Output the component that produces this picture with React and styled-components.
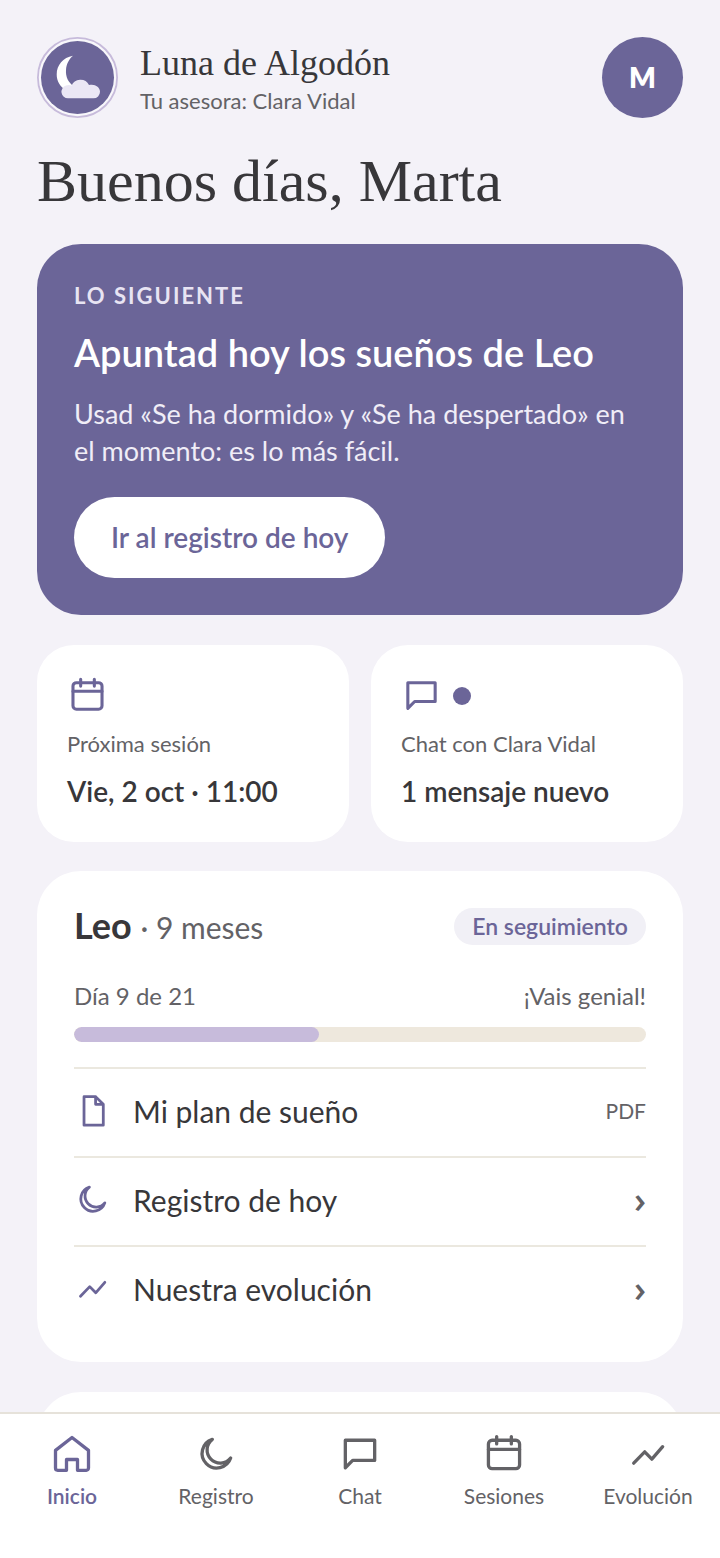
import React from 'react';
import styled, { createGlobalStyle } from 'styled-components';

const GlobalStyle = createGlobalStyle`
  * {
    box-sizing: border-box;
    margin: 0;
    padding: 0;
  }

  body {
    background: #f4f2f8;
    color: #38373a;
    font-family: Lato, 'Open Sans', sans-serif;
  }

  a {
    color: inherit;
    text-decoration: none;
  }
`;

const Screen = styled.div`
  display: flex;
  flex-direction: column;
  height: 100vh;
`;

const Content = styled.main`
  flex: 1;
  min-height: 0;
  overflow-y: auto;
  scrollbar-width: none;
  padding: 37px 37px 0;
`;

const Header = styled.header`
  display: flex;
  align-items: center;
  gap: 22px;
`;

const Logo = styled.svg`
  flex: none;
  width: 81px;
  height: 81px;
`;

const Brand = styled.div`
  flex: 1;
  min-width: 0;
  padding-top: 4px;
`;

const BrandName = styled.p`
  font-family: 'Liberation Serif', serif;
  font-size: 36px;
  line-height: 42px;
`;

const Advisor = styled.p`
  color: #636266;
  font-size: 22px;
  line-height: 34px;
`;

const Avatar = styled.button`
  flex: none;
  width: 81px;
  height: 81px;
  padding-bottom: 2px;
  border: 0;
  border-radius: 50%;
  background: #6b6598;
  color: #fff;
  font: 800 28px Lato, sans-serif;
`;

const Greeting = styled.h1`
  margin: 30px 0;
  font-family: 'Liberation Serif', serif;
  font-size: 60px;
  font-weight: 400;
  line-height: 66px;
`;

const Hero = styled.section`
  padding: 37px;
  border-radius: 44px;
  background: #6b6598;
  color: #fff;
`;

const HeroLabel = styled.p`
  color: #e8e4f3;
  font-size: 22px;
  font-weight: 700;
  letter-spacing: 2px;
  line-height: 29px;
  text-transform: uppercase;
`;

const HeroTitle = styled.h2`
  margin: 22px 0 23px;
  font-size: 38px;
  font-weight: 600;
  line-height: 40px;
`;

const HeroText = styled.p`
  color: #f0edf7;
  font-size: 27px;
  line-height: 37px;
`;

const HeroButton = styled.button`
  height: 81px;
  margin-top: 28px;
  padding: 0 37px 2px;
  border: 0;
  border-radius: 41px;
  background: #fff;
  color: #6b6598;
  font: 600 28px Lato, sans-serif;
`;

const Tiles = styled.div`
  display: grid;
  grid-template-columns: 1fr 1fr;
  gap: 22px;
  margin: 30px 0 29px;
`;

const Tile = styled.a`
  display: flex;
  flex-direction: column;
  gap: 15px;
  padding: 30px 30px 32px;
  border-radius: 37px;
  background: #fff;
`;

const TileIcons = styled.span`
  display: flex;
  align-items: center;
  gap: 11px;
  color: #6b6598;
`;

const UnreadDot = styled.span`
  width: 18px;
  height: 18px;
  border-radius: 50%;
  background: #6b6598;
`;

const TileLabel = styled.span`
  color: #636266;
  font-size: 22px;
  line-height: 26px;
`;

const TileValue = styled.strong`
  font-size: 28px;
  font-weight: 600;
  line-height: 38px;
`;

const Card = styled.section`
  min-height: 120px;
  margin-bottom: 30px;
  padding: 37px 37px 28px;
  border-radius: 44px;
  background: #fff;
`;

const CardHead = styled.div`
  display: flex;
  align-items: center;
  justify-content: space-between;
  height: 37px;
`;

const BabyName = styled.h2`
  font-size: 36px;
  font-weight: 700;
  line-height: 37px;
`;

const Age = styled.span`
  color: #636266;
  font-size: 30px;
  font-weight: 400;
`;

const Badge = styled.span`
  padding: 0 18px;
  border-radius: 19px;
  background: #f1f0f6;
  color: #6b6598;
  font-size: 23px;
  font-weight: 600;
  line-height: 37px;
`;

const ProgressLabels = styled.div`
  display: flex;
  justify-content: space-between;
  margin: 35px 0 15px;
  color: #636266;
  font-size: 24px;
  line-height: 32px;
`;

const Track = styled.div`
  height: 15px;
  margin-bottom: 25px;
  overflow: hidden;
  border-radius: 8px;
  background: #eee8dd;
`;

const Fill = styled.div`
  height: 100%;
  border-radius: 8px;
  background: #c7bbdb;
`;

const Row = styled.a`
  display: flex;
  align-items: center;
  gap: 22px;
  height: 89px;
  padding-bottom: 4px;
  border-top: 2px solid #ebe8df;
  font-size: 30px;
`;

const RowIcon = styled.span`
  display: flex;
  color: #6b6598;
`;

const RowText = styled.span`
  flex: 1;
`;

const RowHint = styled.span`
  color: #636266;
  font-size: 21px;
`;

const RowArrow = styled.span`
  color: #636266;
  font-family: 'Open Sans', sans-serif;
  font-size: 36px;
  font-weight: 600;
  line-height: 36px;
`;

const TabBar = styled.nav`
  display: grid;
  grid-template-columns: repeat(5, 1fr);
  flex: none;
  padding: 18px 0 49px;
  border-top: 2px solid #e6e2da;
  background: #fff;
`;

const Tab = styled.a`
  display: flex;
  flex-direction: column;
  align-items: center;
  gap: 7px;
  color: ${({ $active }) => ($active ? '#6b6598' : '#636266')};
  font-size: 21px;
  font-weight: ${({ $active }) => ($active ? 600 : 400)};
  line-height: 26px;
`;

const IconSvg = styled.svg`
  display: block;
  width: ${({ $size }) => $size}px;
  height: ${({ $size }) => $size}px;
  fill: none;
  stroke: currentColor;
  stroke-width: 1.8;
  stroke-linecap: round;
  stroke-linejoin: round;
`;

const shapes = {
  home: (
    <path d="M3 10 12 3l9 7v9.7a1.2 1.2 0 0 1-1.2 1.2H15V15H9v5.9H4.2A1.2 1.2 0 0 1 3 19.7Z" />
  ),
  moon: <path d="M10 4A8 8 0 1 0 20 14.2 7.2 7.2 0 1 1 10 4Z" />,
  chat: <path d="M4 4.5h16v11H8l-4 4Z" />,
  calendar: (
    <>
      <rect x="3.5" y="4.5" width="17" height="15.5" rx="2" />
      <path d="M3.5 9.5h17M8 2.5v4M16 2.5v4" />
    </>
  ),
  chart: <path d="m4.2 17 6-6.2 3.9 4L20 8" />,
  file: <path d="M6.5 3H14l5 5v13.5H6.5ZM14 3v5h5" />,
};

const Icon = ({ name, size }) => (
  <IconSvg viewBox="0 0 24 24" $size={size} aria-hidden="true">
    {shapes[name]}
  </IconSvg>
);

const rows = [
  { icon: 'file', text: 'Mi plan de sueño', hint: 'PDF' },
  { icon: 'moon', text: 'Registro de hoy' },
  { icon: 'chart', text: 'Nuestra evolución' },
];

const tabs = [
  { icon: 'home', text: 'Inicio' },
  { icon: 'moon', text: 'Registro' },
  { icon: 'chat', text: 'Chat' },
  { icon: 'calendar', text: 'Sesiones' },
  { icon: 'chart', text: 'Evolución' },
];

const day = 9;
const totalDays = 21;

const App = () => (
  <Screen>
    <GlobalStyle />
    <Content>
      <Header>
        <Logo viewBox="0 0 81 81" aria-hidden="true">
          <circle cx="40.5" cy="40.5" r="39.6" fill="#f8f7fb" stroke="#c7bbdb" strokeWidth="1.8" />
          <circle cx="40.5" cy="40.5" r="36.5" fill="#6b6598" />
          <path
            d="M36 18.7C26 20.5 19.7 28 19.7 37.5c0 6.5 3.3 12.5 9.3 15.5l9-3C31 46 28.5 39.5 29 33c.3-6 3-11 7-14.3Z"
            fill="#fff"
          />
          <path
            d="M31 61.3a6.5 6.5 0 0 1-2-12.7c2-.8 4-.7 5.5.2a9.5 9.5 0 0 1 17.5-.7c5.5-1.5 11 1.7 11 6.7a6.5 6.5 0 0 1-6.5 6.5Z"
            fill="#ebe7f5"
          />
        </Logo>
        <Brand>
          <BrandName>Luna de Algodón</BrandName>
          <Advisor>Tu asesora: Clara Vidal</Advisor>
        </Brand>
        <Avatar type="button">M</Avatar>
      </Header>
      <Greeting>Buenos días, Marta</Greeting>

      <Hero>
        <HeroLabel>Lo siguiente</HeroLabel>
        <HeroTitle>Apuntad hoy los sueños de Leo</HeroTitle>
        <HeroText>
          Usad «Se ha dormido» y «Se ha despertado» en el momento: es lo más fácil.
        </HeroText>
        <HeroButton type="button">Ir al registro de hoy</HeroButton>
      </Hero>

      <Tiles>
        <Tile href="#sesiones">
          <TileIcons>
            <Icon name="calendar" size={41} />
          </TileIcons>
          <TileLabel>Próxima sesión</TileLabel>
          <TileValue>Vie, 2 oct · 11:00</TileValue>
        </Tile>
        <Tile href="#chat">
          <TileIcons>
            <Icon name="chat" size={41} />
            <UnreadDot />
          </TileIcons>
          <TileLabel>Chat con Clara Vidal</TileLabel>
          <TileValue>1 mensaje nuevo</TileValue>
        </Tile>
      </Tiles>

      <Card>
        <CardHead>
          <BabyName>
            Leo <Age>· 9 meses</Age>
          </BabyName>
          <Badge>En seguimiento</Badge>
        </CardHead>
        <ProgressLabels>
          <span>
            Día {day} de {totalDays}
          </span>
          <span>¡Vais genial!</span>
        </ProgressLabels>
        <Track>
          <Fill style={{ width: `${(day / totalDays) * 100}%` }} />
        </Track>
        {rows.map(({ icon, text, hint }) => (
          <Row key={text} href={`#${icon}`}>
            <RowIcon>
              <Icon name={icon} size={37} />
            </RowIcon>
            <RowText>{text}</RowText>
            {hint ? <RowHint>{hint}</RowHint> : <RowArrow>›</RowArrow>}
          </Row>
        ))}
      </Card>
      <Card />
    </Content>

    <TabBar>
      {tabs.map(({ icon, text }, i) => (
        <Tab key={text} href={`#${icon}`} $active={i === 0}>
          <Icon name={icon} size={44} />
          {text}
        </Tab>
      ))}
    </TabBar>
  </Screen>
);

export default App;
